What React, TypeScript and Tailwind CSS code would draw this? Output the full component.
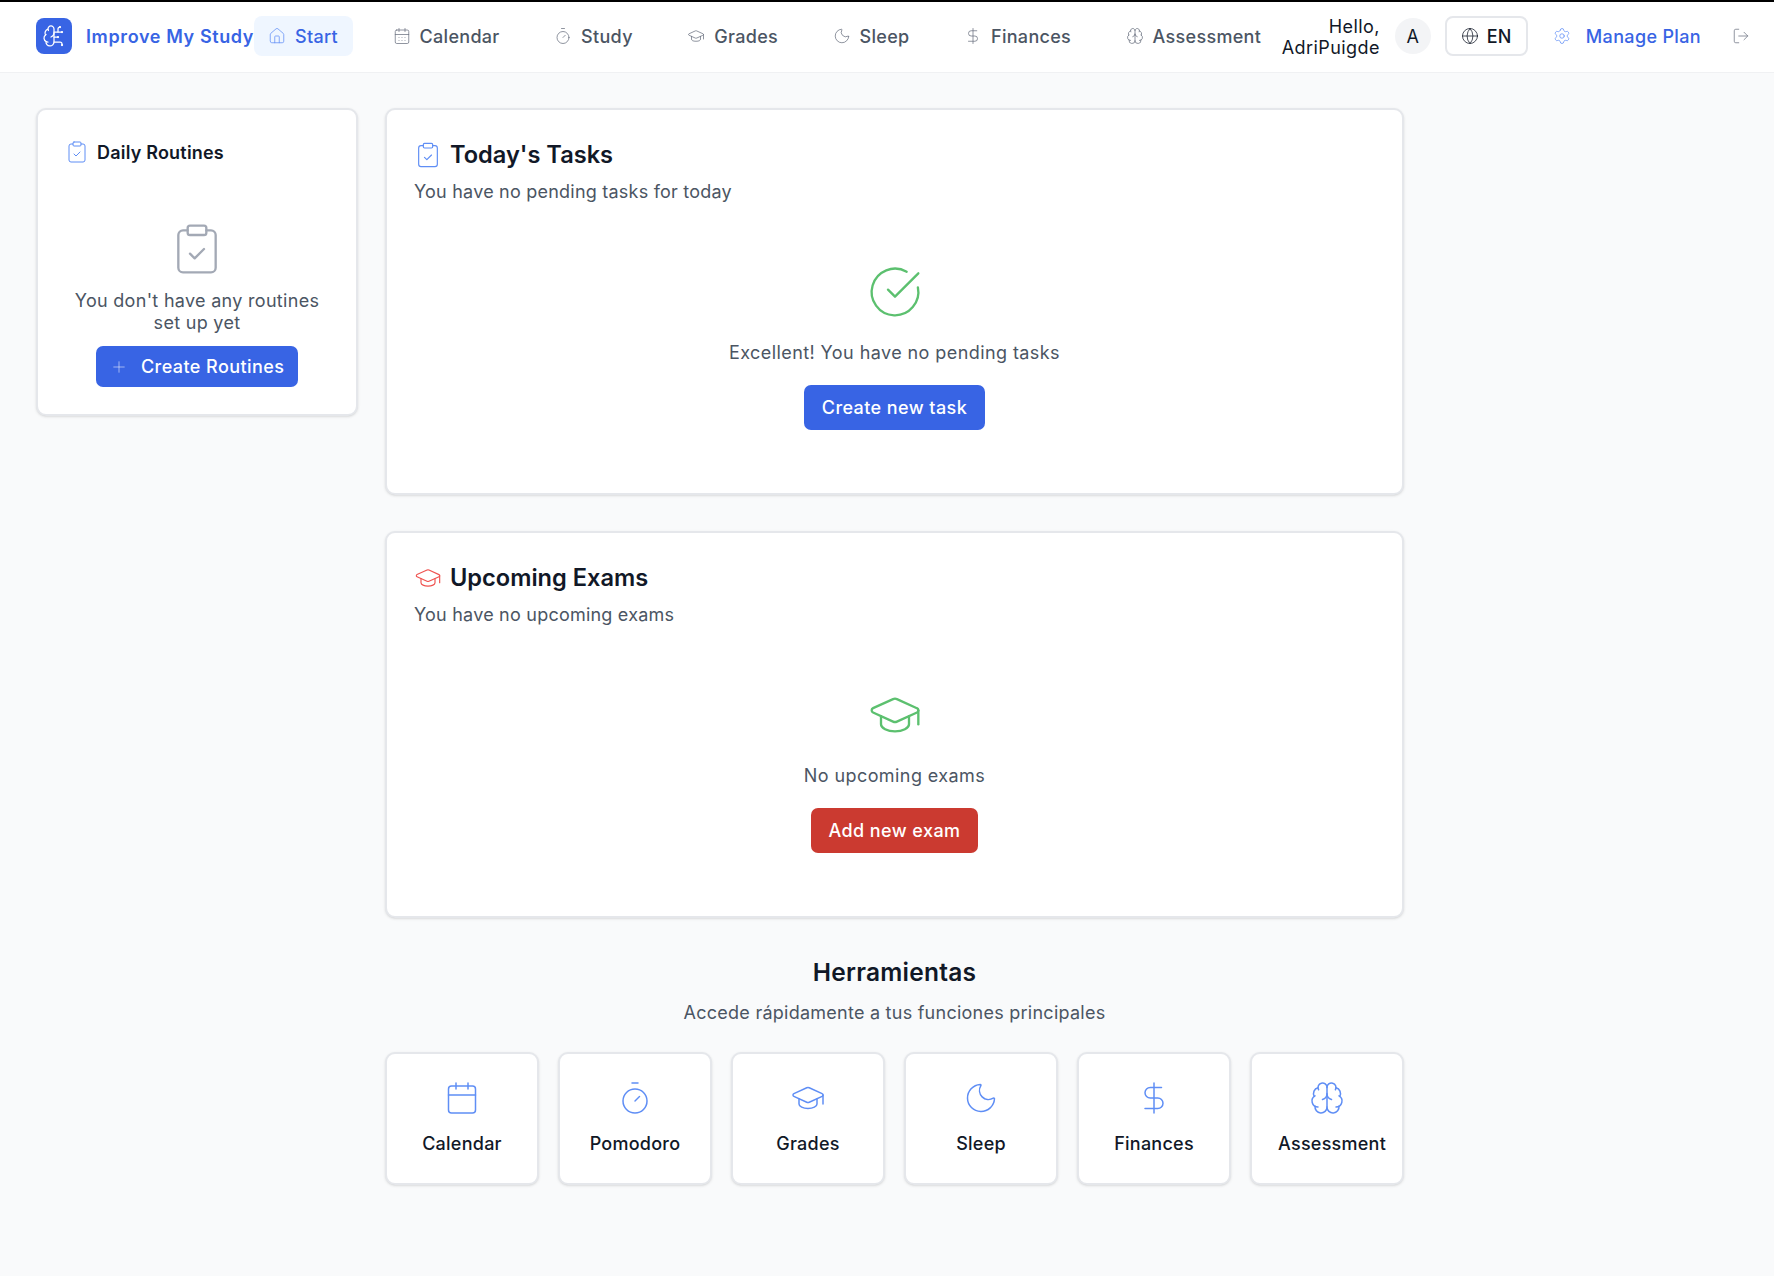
import React from "react";
import {
  House, CalendarDays, Calendar, Timer, GraduationCap, Moon, DollarSign, Brain, BrainCircuit,
  Globe, Settings, LogOut, Plus, ClipboardCheck, CircleCheckBig,
} from "lucide-react";

const navItems = [
  { label: "Calendar", Icon: CalendarDays },
  { label: "Study", Icon: Timer },
  { label: "Grades", Icon: GraduationCap },
  { label: "Sleep", Icon: Moon },
  { label: "Finances", Icon: DollarSign },
  { label: "Assessment", Icon: Brain },
];

const tools = [
  { label: "Calendar", Icon: Calendar },
  { label: "Pomodoro", Icon: Timer },
  { label: "Grades", Icon: GraduationCap },
  { label: "Sleep", Icon: Moon },
  { label: "Finances", Icon: DollarSign },
  { label: "Assessment", Icon: Brain },
];

function SectionCard(props: {
  icon: React.ReactNode;
  title: string;
  subtitle: string;
  big: React.ReactNode;
  message: string;
  action: string;
  actionClass: string;
}) {
  return (
    <section className="rounded-[10px] border-2 border-[#e5e7eb] bg-white px-[27px] pt-[29px] pb-[63px] shadow-sm">
      <div className="flex h-8 items-center gap-[8px]">
        {props.icon}
        <h2 className="text-[23.6px] leading-8 font-semibold text-[#111827]">{props.title}</h2>
      </div>
      <p className="mt-[9px] text-[18px] leading-6 tracking-[0.22px] text-[#4b5563]">{props.subtitle}</p>
      <div className="mt-[60px] flex justify-center">{props.big}</div>
      <p className="mt-[21px] text-center text-[18px] leading-6 tracking-[0.42px] text-[#4b5563]">{props.message}</p>
      <div className="mt-5 flex justify-center">
        <button className={`h-[45px] rounded-[7px] text-[18px] font-medium tracking-[0.42px] text-white ${props.actionClass}`}>
          {props.action}
        </button>
      </div>
    </section>
  );
}

export default function App() {
  return (
    <div className="min-h-screen bg-[#f9fafb] font-['Inter',sans-serif]">
      <header className="flex h-[73px] items-center border-t-2 border-b border-t-black border-b-[#f0f1f3] bg-white pb-[2px] pl-9 whitespace-nowrap">
        <div className="flex h-9 w-9 shrink-0 items-center justify-center rounded-lg bg-[#3864e4] text-white">
          <BrainCircuit size={24} strokeWidth={1.25} />
        </div>
        <span className="ml-[14px] text-[18px] font-semibold tracking-[0.62px] text-[#3864e4]">Improve My Study</span>
        <nav className="flex items-center gap-[25.5px]">
          <a className="flex h-10 items-center gap-[9px] rounded-lg bg-[#eff6ff] pr-[15px] pl-[14px] text-[18px] font-medium tracking-[0.3px] text-[#3864e4]">
            <House size={18} strokeWidth={1} className="text-[#5f8ef5]" />
            Start
          </a>
          {navItems.map(({ label, Icon }) => (
            <a key={label} className="flex h-10 items-center gap-[9px] pr-[15px] pl-[14px] text-[18px] font-medium tracking-[0.3px] text-[#4b5563]">
              <Icon size={18} strokeWidth={1} className="text-[#6b7280]" />
              {label}
            </a>
          ))}
        </nav>
        <div className="ml-auto flex items-center pr-6">
          <div className="w-[98px] pt-[2px] whitespace-normal text-right text-[18px] leading-[21.5px] tracking-[0.42px] text-[#111827]">Hello, AdriPuigde</div>
          <div className="ml-[15px] flex h-9 w-9 items-center justify-center rounded-full bg-[#f3f4f6] text-[18px] text-[#111827]">A</div>
          <button className="ml-[14px] flex h-10 w-[83px] items-center gap-2 rounded-lg border-2 border-[#e5e7eb] bg-white pl-[14px] text-[18px] font-medium text-[#111827]">
            <Globe size={18} strokeWidth={1} />
            EN
          </button>
          <a className="ml-[25px] flex items-center gap-[15px] text-[18px] font-medium tracking-[0.35px] text-[#3864e4]">
            <Settings size={18} strokeWidth={1} className="text-[#5f8ef5]" />
            Manage Plan
          </a>
          <LogOut size={18} strokeWidth={1} className="ml-[31px] text-[#6b7280]" />
        </div>
      </header>

      <main className="flex items-start gap-[27px] pt-[35px] pl-9">
        <aside className="w-[322px] shrink-0 rounded-[10px] border-2 border-[#e5e7eb] bg-white px-[27px] pt-[28px] pb-[27px] shadow-sm">
          <div className="flex h-7 items-center gap-2">
            <ClipboardCheck size={24} strokeWidth={1} className="text-[#5f8ef5]" />
            <h3 className="text-[18px] font-semibold tracking-[0.2px] text-[#111827]">Daily Routines</h3>
          </div>
          <div className="mt-[55px] flex justify-center">
            <ClipboardCheck size={56} strokeWidth={1} className="text-[#a3a9b5]" />
          </div>
          <p className="mt-[13px] text-center text-[18px] leading-[22px] tracking-[0.3px] text-[#4b5563]">
            You don't have any routines set up yet
          </p>
          <div className="mt-3 flex justify-center">
            <button className="flex h-[41px] w-[202px] items-center gap-[13px] rounded-[7px] bg-[#3864e4] pl-[14px] text-[18px] font-medium tracking-[0.42px] text-white">
              <Plus size={18} strokeWidth={1} className="text-white/70" />
              Create Routines
            </button>
          </div>
        </aside>

        <div className="w-[1019px] shrink-0">
          <SectionCard
            icon={<ClipboardCheck size={28} strokeWidth={1} className="text-[#5f8ef5]" />}
            title="Today's Tasks"
            subtitle="You have no pending tasks for today"
            big={<CircleCheckBig size={56} strokeWidth={1} className="text-[#5cc06f]" />}
            message="Excellent! You have no pending tasks"
            action="Create new task"
            actionClass="w-[181px] bg-[#3864e4]"
          />
          <div className="mt-[36px]">
            <SectionCard
              icon={<GraduationCap size={28} strokeWidth={1} className="text-[#ef5350]" />}
              title="Upcoming Exams"
              subtitle="You have no upcoming exams"
              big={<GraduationCap size={56} strokeWidth={1} className="text-[#5cc06f]" />}
              message="No upcoming exams"
              action="Add new exam"
              actionClass="w-[167px] bg-[#cb3a30]"
            />
          </div>

          <h2 className="mt-[38px] text-center text-[24.5px] leading-8 font-semibold tracking-[0.25px] text-[#111827]">Herramientas</h2>
          <p className="mt-[13px] text-center text-[18px] leading-6 tracking-[0.25px] text-[#4b5563]">
            Accede rápidamente a tus funciones principales
          </p>
          <div className="mt-[27px] grid grid-cols-6 gap-[19px]">
            {tools.map(({ label, Icon }) => (
              <div key={label} className="rounded-[10px] border-2 border-[#e5e7eb] bg-white px-[26px] pt-[26px] pb-[27px] shadow-sm">
                <Icon size={36} strokeWidth={1} className="mx-auto text-[#5f8ef5]" />
                <div className="mt-4 text-center text-[18px] leading-6 font-medium tracking-[0.25px] whitespace-nowrap text-[#111827]">
                  {label}
                </div>
              </div>
            ))}
          </div>
        </div>
      </main>
    </div>
  );
}
